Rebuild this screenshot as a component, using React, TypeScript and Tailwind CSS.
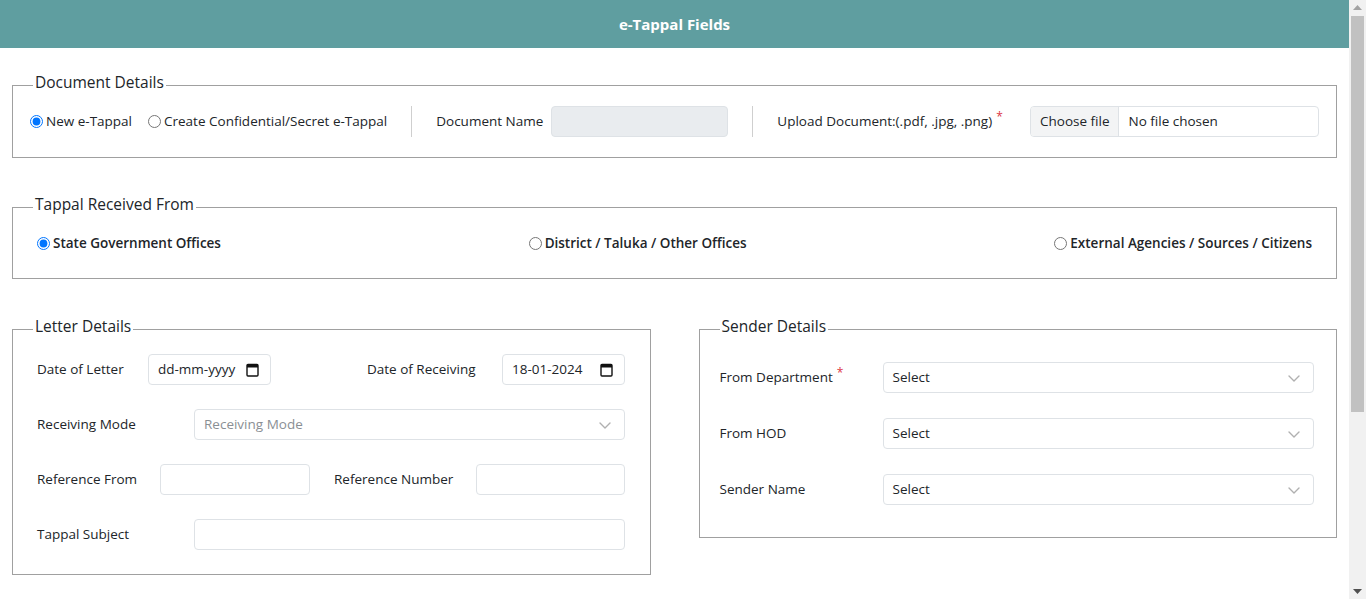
import React from 'react';

const font = { fontFamily: '"Open Sans", "Noto Sans", sans-serif' };

function Req() {
  return <span className="text-[#dc3545] text-[12px] align-top relative -top-[3px] ml-[4px]">*</span>;
}

function Chevron() {
  return (
    <svg width="16" height="16" viewBox="0 0 16 16" className="shrink-0">
      <path d="M3 6l5 5 5-5" fill="none" stroke="#b0b0b0" strokeWidth="1.4" strokeLinecap="round" strokeLinejoin="round" />
    </svg>
  );
}

function CalendarIcon() {
  return (
    <svg width="13" height="14" viewBox="0 0 13 14" className="shrink-0">
      <rect x="1" y="1.5" width="11" height="11.5" rx="1" fill="none" stroke="#111" strokeWidth="1.4" />
      <rect x="1" y="1.5" width="11" height="3" fill="#111" />
    </svg>
  );
}

function DateBox({ value, placeholder }: { value?: string; placeholder?: string }) {
  return (
    <div className="w-[123px] h-[31px] border border-[#dee2e6] rounded-[4px] bg-white flex items-center justify-between pl-[9px] pr-[11px] text-[#212529]">
      <span>{value ?? placeholder}</span>
      <CalendarIcon />
    </div>
  );
}

function SelectBox({ text, muted }: { text: string; muted?: boolean }) {
  return (
    <div className="flex-1 h-[31px] border border-[#dee2e6] rounded-[4px] bg-white flex items-center justify-between pl-[9px] pr-[11px]">
      <span className={muted ? 'text-[#8a8f94]' : 'text-[#212529]'}>{text}</span>
      <Chevron />
    </div>
  );
}

function TextBox({ className }: { className: string }) {
  return <div className={`h-[31px] border border-[#dee2e6] rounded-[4px] bg-white ${className}`} />;
}

function Radio({ checked, label, bold }: { checked?: boolean; label: string; bold?: boolean }) {
  return (
    <label className={`flex items-center gap-[3px] text-[#212529] ${bold ? 'font-semibold' : ''}`}>
      <input type="radio" defaultChecked={checked} name={bold ? 'from' : 'kind'} className="m-0 w-[13px] h-[13px] accent-[#0075ff]" />
      <span>{label}</span>
    </label>
  );
}

function Legend({ children }: { children: React.ReactNode }) {
  return (
    <legend className="ml-[20px] px-[2px] pb-[6px] text-[15.5px] leading-[24px] font-medium text-[#212529]">
      {children}
    </legend>
  );
}

function Scrollbar() {
  return (
    <aside className="w-[17px] shrink-0 bg-[#f1f1f1] flex flex-col items-center">
      <div className="h-[15px] flex items-center justify-center">
        <svg width="9" height="5" viewBox="0 0 9 5"><path d="M0 5L4.5 0 9 5z" fill="#a3a3a3" /></svg>
      </div>
      <div className="w-[13px] h-[396px] bg-[#c1c1c1] mt-[1px]" />
      <div className="flex-1" />
      <div className="h-[15px] flex items-center justify-center">
        <svg width="9" height="5" viewBox="0 0 9 5"><path d="M0 0L4.5 5 9 0z" fill="#505050" /></svg>
      </div>
    </aside>
  );
}

export default function App() {
  return (
    <div style={font} className="h-[599px] flex overflow-hidden bg-white text-[#212529] text-[13.5px]">
      <main className="flex-1 min-w-0">
        <header className="h-[48px] bg-[#5f9ea0] flex items-center justify-center">
          <h1 className="text-white font-bold text-[15px]">e-Tappal Fields</h1>
        </header>

        <div className="px-[12px] pt-[22px]">
          <fieldset className="border border-[#a0a0a0] m-0 p-0">
            <Legend>Document Details</Legend>
            <div className="flex items-center pl-[17px] pr-[17px] pt-[6px] pb-[20px]">
              <div className="flex items-center gap-[16px]">
                <Radio checked label="New e-Tappal" />
                <Radio label="Create Confidential/Secret e-Tappal" />
              </div>
              <div className="w-px h-[31px] bg-[#cfcfcf] mx-[24px]" />
              <span className="mr-[8px]">Document Name</span>
              <div className="w-[177px] h-[31px] bg-[#e9ecef] border border-[#dee2e6] rounded-[4px]" />
              <div className="w-px h-[31px] bg-[#cfcfcf] mx-[24px]" />
              <span>
                Upload Document:(.pdf, .jpg, .png)
                <Req />
              </span>
              <div className="ml-auto w-[289px] h-[31px] border border-[#dee2e6] rounded-[4px] flex items-stretch overflow-hidden">
                <div className="bg-[#f3f4f5] border-r border-[#dee2e6] px-[9px] flex items-center">Choose file</div>
                <div className="px-[9px] flex items-center">No file chosen</div>
              </div>
            </div>
          </fieldset>

          <fieldset className="border border-[#a0a0a0] m-0 p-0 mt-[34px]">
            <Legend>Tappal Received From</Legend>
            <div className="flex items-center justify-between h-[20px] px-[24px] mt-[11px] mb-[25px]">
              <Radio bold checked label="State Government Offices" />
              <Radio bold label="District / Taluka / Other Offices" />
              <Radio bold label="External Agencies / Sources / Citizens" />
            </div>
          </fieldset>

          <div className="grid grid-cols-2 gap-x-[48px] items-start mt-[35px]">
            <fieldset className="border border-[#a0a0a0] m-0 p-0">
              <Legend>Letter Details</Legend>
              <div className="flex flex-col gap-[24px] pl-[24px] pr-[25px] pt-[10px] pb-[24px]">
                <div className="flex items-center">
                  <span className="w-[111px]">Date of Letter</span>
                  <DateBox placeholder="dd-mm-yyyy" />
                  <span className="ml-[96px] w-[135px]">Date of Receiving</span>
                  <DateBox value="18-01-2024" />
                </div>
                <div className="flex items-center">
                  <span className="w-[157px]">Receiving Mode</span>
                  <SelectBox text="Receiving Mode" muted />
                </div>
                <div className="flex items-center">
                  <span className="w-[123px]">Reference From</span>
                  <TextBox className="w-[150px]" />
                  <span className="ml-[24px] w-[142px]">Reference Number</span>
                  <TextBox className="w-[149px]" />
                </div>
                <div className="flex items-center">
                  <span className="w-[157px]">Tappal Subject</span>
                  <TextBox className="flex-1" />
                </div>
              </div>
            </fieldset>

            <fieldset className="border border-[#a0a0a0] m-0 p-0">
              <Legend>Sender Details</Legend>
              <div className="flex flex-col gap-[25px] pl-[20px] pr-[22px] pt-[18px] pb-[32px]">
                <div className="flex items-center">
                  <span className="w-[163px]">
                    From Department
                    <Req />
                  </span>
                  <SelectBox text="Select" />
                </div>
                <div className="flex items-center">
                  <span className="w-[163px]">From HOD</span>
                  <SelectBox text="Select" />
                </div>
                <div className="flex items-center">
                  <span className="w-[163px]">Sender Name</span>
                  <SelectBox text="Select" />
                </div>
              </div>
            </fieldset>
          </div>
        </div>
      </main>
      <Scrollbar />
    </div>
  );
}
